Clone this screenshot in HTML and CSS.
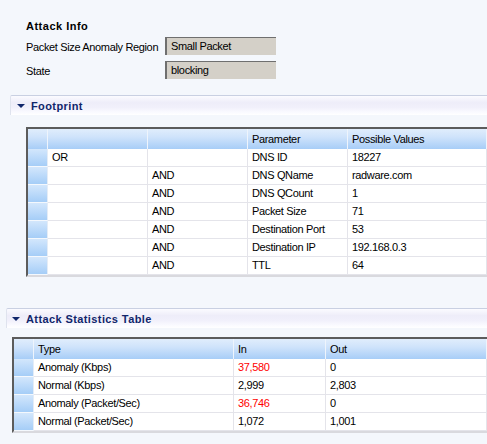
FILE: index.html
```html
<!DOCTYPE html>
<html>
<head>
<meta charset="utf-8">
<link rel="stylesheet" href="styles.css">
</head>
<body>
<div class="info">
  <div class="info-title">Attack Info</div>
  <div class="field-row">
    <div class="field-label">Packet Size Anomaly Region</div>
    <div class="field-box">Small Packet</div>
  </div>
  <div class="field-row">
    <div class="field-label">State</div>
    <div class="field-box">blocking</div>
  </div>
</div>

<div class="section-bar fp-bar"><span class="tri"></span><span class="section-title">Footprint</span></div>

<div class="grid fp-grid">
  <div class="hcell rh"></div><div class="hcell"></div><div class="hcell"></div><div class="hcell">Parameter</div><div class="hcell">Possible Values</div>
  <div class="cell rh"></div><div class="cell">OR</div><div class="cell"></div><div class="cell">DNS ID</div><div class="cell">18227</div>
  <div class="cell rh"></div><div class="cell"></div><div class="cell">AND</div><div class="cell">DNS QName</div><div class="cell">radware.com</div>
  <div class="cell rh"></div><div class="cell"></div><div class="cell">AND</div><div class="cell">DNS QCount</div><div class="cell">1</div>
  <div class="cell rh"></div><div class="cell"></div><div class="cell">AND</div><div class="cell">Packet Size</div><div class="cell">71</div>
  <div class="cell rh"></div><div class="cell"></div><div class="cell">AND</div><div class="cell">Destination Port</div><div class="cell">53</div>
  <div class="cell rh"></div><div class="cell"></div><div class="cell">AND</div><div class="cell">Destination IP</div><div class="cell">192.168.0.3</div>
  <div class="cell rh"></div><div class="cell"></div><div class="cell">AND</div><div class="cell">TTL</div><div class="cell">64</div>
</div>

<div class="section-bar st-bar"><span class="tri"></span><span class="section-title">Attack Statistics Table</span></div>

<div class="grid st-grid">
  <div class="hcell rh"></div><div class="hcell">Type</div><div class="hcell">In</div><div class="hcell">Out</div>
  <div class="cell rh"></div><div class="cell">Anomaly (Kbps)</div><div class="cell red">37,580</div><div class="cell">0</div>
  <div class="cell rh"></div><div class="cell">Normal (Kbps)</div><div class="cell">2,999</div><div class="cell">2,803</div>
  <div class="cell rh"></div><div class="cell">Anomaly (Packet/Sec)</div><div class="cell red">36,746</div><div class="cell">0</div>
  <div class="cell rh"></div><div class="cell">Normal (Packet/Sec)</div><div class="cell">1,072</div><div class="cell">1,001</div>
</div>
</body>
</html>
```
FILE: styles.css
```css
html, body {
  margin: 0;
  padding: 0;
  background: #f4f7fc;
}
body {
  width: 487px;
  height: 444px;
  overflow: hidden;
  font-family: "Liberation Sans", Arial, sans-serif;
  font-size: 11px;
  letter-spacing: -0.35px;
  color: #000;
}
.info {
  padding: 19px 0 0 26px;
}
.info-title {
  font-weight: bold;
  letter-spacing: 0.5px;
  line-height: 14px;
  height: 14px;
  margin-bottom: 4px;
}
.field-row {
  display: flex;
  align-items: center;
  height: 18px;
  margin-bottom: 6px;
}
.field-row:last-child {
  margin-bottom: 0;
}
.field-label {
  width: 139px;
  line-height: 14px;
  padding-top: 1px;
}
.field-box {
  box-sizing: border-box;
  width: 111px;
  height: 18px;
  background: #d4d0c8;
  border-top: 1px solid #6f6f6f;
  border-left: 2px solid #6f6f6f;
  padding: 0 0 0 4px;
  line-height: 17px;
}
.section-bar {
  box-sizing: border-box;
  height: 20px;
  display: flex;
  align-items: center;
  border-top: 1px solid #c9d0e2;
  border-left: 1px solid #dfe3ee;
  border-top-left-radius: 2px;
  background: linear-gradient(#fbfbff 0%, #eeedf9 35%, #f1f0fb 60%, #fafaff 85%, #ffffff 100%);
}
.fp-bar {
  margin: 16px 0 0 10px;
  padding-left: 6px;
}
.st-bar {
  margin: 31px 0 0 6px;
  padding-left: 5px;
}
.tri {
  width: 0;
  height: 0;
  border-left: 4px solid transparent;
  border-right: 4px solid transparent;
  border-top: 4px solid #10266b;
  margin-right: 6px;
  margin-top: 1px;
}
.section-title {
  font-weight: bold;
  color: #10266b;
  letter-spacing: 0.4px;
  line-height: 14px;
}
.grid {
  display: grid;
  border-top: 2px solid #5c5c5c;
  border-left: 2px solid #5c5c5c;
  border-bottom: 2px solid #d9d9de;
  background: #fff;
}
.fp-grid {
  margin: 12px 0 0 26px;
  grid-template-columns: 20px 100px 100px 100px 1fr;
}
.st-grid {
  margin: 9px 0 0 12px;
  grid-template-columns: 20px 200px 92px 1fr;
}
.hcell {
  box-sizing: border-box;
  height: 20px;
  line-height: 20px;
  padding-left: 4px;
  border-right: 1px solid #eef4fc;
  background: linear-gradient(#e0edfc 0%, #cfe3fb 40%, #a7cdf7 100%);
  white-space: nowrap;
  overflow: hidden;
}
.cell {
  box-sizing: border-box;
  height: 18px;
  line-height: 17px;
  padding-left: 4px;
  border-right: 1px solid #e4e4ea;
  border-bottom: 1px solid #e4e4ea;
  white-space: nowrap;
  overflow: hidden;
}
.cell.rh {
  border-right: 1px solid #e4ecf6;
  border-bottom: 1px solid #f4f8fd;
  background: linear-gradient(#d3e7fc 0%, #bcdafa 50%, #a5cdf7 100%);
}
.red {
  color: #ff0000;
}
```
